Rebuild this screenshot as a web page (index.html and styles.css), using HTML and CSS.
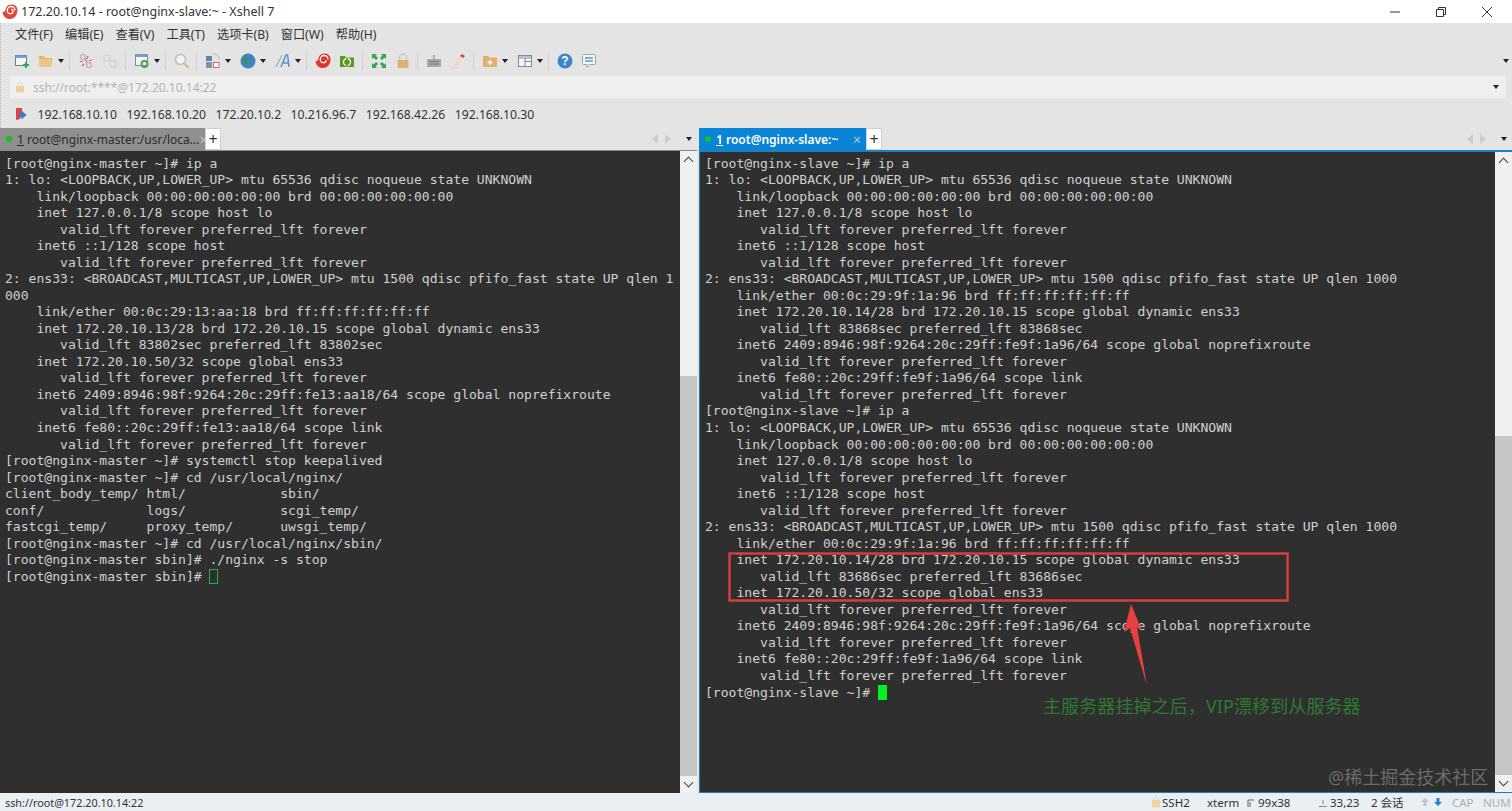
FILE: index.html
```html
<!DOCTYPE html>
<html lang="en">
<head>
    <meta charset="UTF-8">
    <title>172.20.10.14 - root@nginx-slave:~ - Xshell 7</title>
    <link rel="stylesheet" href="styles.css">
</head>
<body>

<div class="window">
    <div class="titlebar">
        <svg class="app-logo" viewBox="0 0 16 16"><path d="M15.500 6C15.500 2.500 12.500 .5 9.500 .5 5.500 .5 3.500 3.500 3.500 6 3 7.500 2 8 .5 8 1 12.500 4 15 8 15c4.500 0 7.500-4 7.500-9z" fill="#e0483c"/><path d="M13 6.500C13 4 11 2.500 9 2.500 6.800 2.500 5.300 4.500 5.300 6.400 5.300 8.200 6.800 9.700 8.500 9.700 10 9.700 11 8.500 11 7.200 11 6.100 10.100 5.300 9 5.300" fill="none" stroke="#fff" stroke-width="1.300"/></svg>
        <span class="title-text">172.20.10.14 - root@nginx-slave:~ - Xshell 7</span>
        <div class="window-btns">
            <svg viewBox="0 0 12 12"><path d="M1 6h10" stroke="#333" fill="none"/></svg>
            <svg viewBox="0 0 12 12"><path d="M1.500 3.500h7v7h-7zM3.500 3.500v-2h7v7h-2" stroke="#333" fill="none"/></svg>
            <svg viewBox="0 0 12 12"><path d="M1 1l10 10M11 1L1 11" stroke="#333" fill="none"/></svg>
        </div>
    </div>

    <div class="chrome">
        <div class="menubar">
            <span>文件(F)</span><span>编辑(E)</span><span>查看(V)</span><span>工具(T)</span><span>选项卡(B)</span><span>窗口(W)</span><span>帮助(H)</span>
        </div>

        <div class="toolbar">
            <svg class="tool" viewBox="0 0 16 16"><rect x="1.500" y="2.500" width="11" height="10" fill="#f6f6f6" stroke="#6f7f93"/><path d="M1.500 2.500h11v2.500h-11z" fill="#6fa0d8"/><path d="M12 9v6M9 12h6" stroke="#2fa84a" stroke-width="2"/></svg>
            <svg class="tool" viewBox="0 0 16 16"><path d="M1 3h5l1 2h7l-1 9H1z" fill="#e3b56f"/><path d="M1 6h14l-2 8H1z" fill="#edc587"/></svg>
            <i class="caret"></i><i class="sep"></i>
            <svg class="tool" viewBox="0 0 16 16"><circle cx="5" cy="4" r="2.500" fill="none" stroke="#bbb" stroke-width="1.500"/><circle cx="11" cy="12" r="2.500" fill="none" stroke="#bbb" stroke-width="1.500"/><path d="M2 8l3 1M7 6l2 3M10 3l-1 3M14 7l-3 1M4 13l2-2" stroke="#e0606a" stroke-width="1.300"/></svg>
            <svg class="tool" viewBox="0 0 16 16"><rect x="2" y="2" width="6" height="6" rx="2" fill="none" stroke="#d2d2d2" stroke-width="1.500"/><rect x="8" y="8" width="6" height="6" rx="2" fill="none" stroke="#d2d2d2" stroke-width="1.500"/></svg>
            <i class="sep"></i>
            <svg class="tool" viewBox="0 0 16 16"><rect x="1.500" y="1.500" width="12" height="11" fill="#f4f4f4" stroke="#7d8a99"/><path d="M1.500 1.500h12v2.500h-12z" fill="#6fa0d8"/><circle cx="10.500" cy="11" r="3" fill="none" stroke="#4ea54a" stroke-width="2"/></svg>
            <i class="caret"></i><i class="sep"></i>
            <svg class="tool" viewBox="0 0 16 16"><circle cx="6.500" cy="6.500" r="5" fill="#f4f4f4" stroke="#bdbdbd" stroke-width="1.500"/><path d="M10.500 10.500l4 4" stroke="#d9b36b" stroke-width="2"/></svg>
            <i class="sep"></i>
            <svg class="tool" viewBox="0 0 16 16"><rect x="1" y="3" width="6" height="5" fill="#5f86b5"/><rect x="1" y="9" width="6" height="6" fill="#7f93a8"/><rect x="8.500" y="9.500" width="5.500" height="5" fill="#fff" stroke="#d9606a"/><path d="M8 1h3l3 3v3" stroke="#bbb" fill="none"/></svg>
            <i class="caret"></i>
            <svg class="tool" viewBox="0 0 16 16"><circle cx="8" cy="8" r="7.500" fill="#3f86c9"/><path d="M3 5l3-2 2 2-1 3 2 2-1 3-3-3-2-2zM11 4l2 2-1 2-2-2z" fill="#3e8f5a"/></svg>
            <i class="caret"></i>
            <svg class="tool" viewBox="0 0 16 16"><path d="M1 14L7 2" stroke="#999" fill="none"/><path d="M6 14L11 2h1.500l1.500 12M8 10h5.500" stroke="#5a8fd0" stroke-width="1.500" fill="none"/></svg>
            <i class="caret"></i><i class="sep"></i>
            <svg class="tool" viewBox="0 0 16 16"><path d="M15.500 6C15.500 2.500 12.500 .5 9.500 .5 5.500 .5 3.500 3.500 3.500 6 3 7.500 2 8 .5 8 1 12.500 4 15 8 15c4.500 0 7.500-4 7.500-9z" fill="#e0352f"/><path d="M13 6.500C13 4 11 2.500 9 2.500 6.800 2.500 5.300 4.500 5.300 6.400 5.300 8.200 6.800 9.700 8.500 9.700 10 9.700 11 8.500 11 7.200" fill="none" stroke="#fff" stroke-width="1.300"/></svg>
            <svg class="tool" viewBox="0 0 16 16"><path d="M1 3h5l1 1.500h8V14H1z" fill="#5b9a1e"/><circle cx="8" cy="9" r="3.500" fill="none" stroke="#fff" stroke-width="1.300"/><path d="M8 5v8" stroke="#5b9a1e" stroke-width="1.500"/></svg>
            <i class="sep"></i>
            <svg class="tool" viewBox="0 0 16 16"><path d="M1 1h5L4.500 2.500l2.500 2.500-2 2-2.500-2.500L1 6zM15 1v5l-1.500-1.500L11 7 9 5l2.500-2.500L10 1zM1 15v-5l1.500 1.500L5 9l2 2-2.500 2.500L6 15zM15 15h-5l1.500-1.500L9 11l2-2 2.500 2.500L15 10z" fill="#35a64f"/></svg>
            <svg class="tool" viewBox="0 0 16 16"><rect x="2.500" y="7" width="11" height="8" rx="1" fill="#e1b070"/><path d="M4.500 7V4.500a3.500 3.500 0 0 1 7 0V7" fill="none" stroke="#c9c9c9" stroke-width="1.500"/></svg>
            <i class="sep"></i>
            <svg class="tool" viewBox="0 0 16 16"><rect x="1" y="6" width="14" height="8" rx="1" fill="#a9a9a9"/><path d="M8 6V2M3 8.500h10M3 11h10" stroke="#777"/></svg>
            <svg class="tool" viewBox="0 0 16 16"><path d="M4 11l6-8 3 2-6 8-3 1z" fill="#eedcc0"/><path d="M10 3l2-2 3 2-2 2z" fill="#d9484a"/><path d="M1 15h8" stroke="#e8cf9f"/></svg>
            <i class="sep"></i>
            <svg class="tool" viewBox="0 0 16 16"><path d="M1 3h5l1 1.500h8V14H1z" fill="#e1b070"/><path d="M8 7v5M5.500 9.500h5" stroke="#fff" stroke-width="1.500"/></svg>
            <i class="caret"></i>
            <svg class="tool" viewBox="0 0 16 16"><rect x="1.500" y="2.500" width="13" height="11" fill="#f6f6f6" stroke="#7f8c9c"/><path d="M1.500 3h13v2h-13zM8 5v8M8 8.500h6" stroke="#7f8c9c" fill="none"/></svg>
            <i class="caret"></i><i class="sep"></i>
            <svg class="tool" viewBox="0 0 16 16"><circle cx="8" cy="8" r="7.500" fill="#3f86c9"/><text x="8" y="12" class="help-mark">?</text></svg>
            <svg class="tool" viewBox="0 0 16 16"><path d="M2.500 1.500h11a1 1 0 0 1 1 1v8a1 1 0 0 1-1 1H8l-2 3v-3H2.500a1 1 0 0 1-1-1v-8a1 1 0 0 1 1-1z" fill="#f7f7f7" stroke="#9aa6ad"/><path d="M4 5h8M4 8h8" stroke="#5a9ad6" stroke-width="1.300"/></svg>
            <i class="caret caret-end"></i>
        </div>

        <div class="addressbar">
            <svg class="addr-lock" viewBox="0 0 10 12"><rect x="1" y="5" width="8" height="6.500" rx="1" fill="#eccf9c"/><path d="M3 5V3.500a2 2 0 0 1 4 0V5" fill="none" stroke="#d8d8d8"/></svg>
            <span class="addr-text">ssh://root:****@172.20.10.14:22</span>
            <i class="caret caret-end"></i>
        </div>

        <div class="linkbar">
            <svg class="link-icon" viewBox="0 0 12 12"><path d="M1 0h6v6l-2 2v3L1 12z" fill="#d9434a"/><path d="M7 3l4.500 4L7 11 3.500 7z" fill="#3f78c4"/></svg>
            <span>192.168.10.10</span><span>192.168.10.20</span><span>172.20.10.2</span><span>10.216.96.7</span><span>192.168.42.26</span><span>192.168.10.30</span>
        </div>
    </div>

    <div class="panes">
        <div class="pane">
            <div class="tabbar">
                <div class="tab tab-idle"><i class="dot"></i><span class="tab-label"><u>1</u> root@nginx-master:/usr/loca...</span><span class="tab-x">×</span></div>
                <div class="tab-add">+</div>
                <div class="tab-nav"><i class="nav-left"></i><i class="nav-right"></i><i class="caret"></i></div>
            </div>
            <div class="term-wrap">
<pre class="term">[root@nginx-master ~]# ip a
1: lo: &lt;LOOPBACK,UP,LOWER_UP&gt; mtu 65536 qdisc noqueue state UNKNOWN
    link/loopback 00:00:00:00:00:00 brd 00:00:00:00:00:00
    inet 127.0.0.1/8 scope host lo
       valid_lft forever preferred_lft forever
    inet6 ::1/128 scope host
       valid_lft forever preferred_lft forever
2: ens33: &lt;BROADCAST,MULTICAST,UP,LOWER_UP&gt; mtu 1500 qdisc pfifo_fast state UP qlen 1
000
    link/ether 00:0c:29:13:aa:18 brd ff:ff:ff:ff:ff:ff
    inet 172.20.10.13/28 brd 172.20.10.15 scope global dynamic ens33
       valid_lft 83802sec preferred_lft 83802sec
    inet 172.20.10.50/32 scope global ens33
       valid_lft forever preferred_lft forever
    inet6 2409:8946:98f:9264:20c:29ff:fe13:aa18/64 scope global noprefixroute
       valid_lft forever preferred_lft forever
    inet6 fe80::20c:29ff:fe13:aa18/64 scope link
       valid_lft forever preferred_lft forever
[root@nginx-master ~]# systemctl stop keepalived
[root@nginx-master ~]# cd /usr/local/nginx/
client_body_temp/ html/            sbin/
conf/             logs/            scgi_temp/
fastcgi_temp/     proxy_temp/      uwsgi_temp/
[root@nginx-master ~]# cd /usr/local/nginx/sbin/
[root@nginx-master sbin]# ./nginx -s stop
[root@nginx-master sbin]# <span class="cursor-idle"></span></pre>
                <div class="scrollbar">
                    <div class="arrow-up"></div>
                    <div class="track-top track-top-left"></div>
                    <div class="thumb"></div>
                    <div class="arrow-down"></div>
                </div>
            </div>
        </div>

        <div class="pane pane-active">
            <div class="tabbar">
                <div class="tab tab-active"><i class="dot"></i><span class="tab-label"><u>1</u> root@nginx-slave:~</span><span class="tab-x">×</span></div>
                <div class="tab-add">+</div>
                <div class="tab-nav"><i class="nav-left"></i><i class="nav-right"></i><i class="caret"></i></div>
            </div>
            <div class="term-wrap">
<pre class="term">[root@nginx-slave ~]# ip a
1: lo: &lt;LOOPBACK,UP,LOWER_UP&gt; mtu 65536 qdisc noqueue state UNKNOWN
    link/loopback 00:00:00:00:00:00 brd 00:00:00:00:00:00
    inet 127.0.0.1/8 scope host lo
       valid_lft forever preferred_lft forever
    inet6 ::1/128 scope host
       valid_lft forever preferred_lft forever
2: ens33: &lt;BROADCAST,MULTICAST,UP,LOWER_UP&gt; mtu 1500 qdisc pfifo_fast state UP qlen 1000
    link/ether 00:0c:29:9f:1a:96 brd ff:ff:ff:ff:ff:ff
    inet 172.20.10.14/28 brd 172.20.10.15 scope global dynamic ens33
       valid_lft 83868sec preferred_lft 83868sec
    inet6 2409:8946:98f:9264:20c:29ff:fe9f:1a96/64 scope global noprefixroute
       valid_lft forever preferred_lft forever
    inet6 fe80::20c:29ff:fe9f:1a96/64 scope link
       valid_lft forever preferred_lft forever
[root@nginx-slave ~]# ip a
1: lo: &lt;LOOPBACK,UP,LOWER_UP&gt; mtu 65536 qdisc noqueue state UNKNOWN
    link/loopback 00:00:00:00:00:00 brd 00:00:00:00:00:00
    inet 127.0.0.1/8 scope host lo
       valid_lft forever preferred_lft forever
    inet6 ::1/128 scope host
       valid_lft forever preferred_lft forever
2: ens33: &lt;BROADCAST,MULTICAST,UP,LOWER_UP&gt; mtu 1500 qdisc pfifo_fast state UP qlen 1000
    link/ether 00:0c:29:9f:1a:96 brd ff:ff:ff:ff:ff:ff
    inet 172.20.10.14/28 brd 172.20.10.15 scope global dynamic ens33
       valid_lft 83686sec preferred_lft 83686sec
    inet 172.20.10.50/32 scope global ens33
       valid_lft forever preferred_lft forever
    inet6 2409:8946:98f:9264:20c:29ff:fe9f:1a96/64 scope global noprefixroute
       valid_lft forever preferred_lft forever
    inet6 fe80::20c:29ff:fe9f:1a96/64 scope link
       valid_lft forever preferred_lft forever
[root@nginx-slave ~]# <span class="cursor-on"></span></pre>
                <div class="scrollbar">
                    <div class="arrow-up"></div>
                    <div class="track-top track-top-right"></div>
                    <div class="thumb"></div>
                    <div class="arrow-down"></div>
                </div>
            </div>
        </div>
    </div>

    <div class="statusbar">
        <span class="status-path">ssh://root@172.20.10.14:22</span>
        <svg class="st-lock" viewBox="0 0 10 12"><rect x="1" y="4" width="8" height="7.500" fill="#eed5a8"/><path d="M3 4V3a2 2 0 0 1 4 0v1" fill="none" stroke="#ddd"/></svg>
        <span class="st-ssh">SSH2</span>
        <span class="st-term">xterm</span>
        <span class="st-size"><svg class="st-mark" viewBox="0 0 8 8"><path d="M1 8V1h6M3 8V3" fill="none" stroke="#666"/></svg>99x38</span>
        <span class="st-pos"><svg class="st-mark" viewBox="0 0 8 8"><path d="M0 7.500h8M4 1v4" fill="none" stroke="#888"/></svg>33,23</span>
        <span class="st-sess">2 会话</span>
        <svg class="st-arrow" viewBox="0 0 10 10"><path d="M5 1l4 4H6.500v4h-3V5H1z" fill="#bcc6cc"/></svg>
        <svg class="st-arrow st-arrow-down" viewBox="0 0 10 10"><path d="M5 9l4-4H6.500V1h-3v4H1z" fill="#2f7fd0"/></svg>
        <span class="st-cap">CAP</span>
        <span class="st-num">NUM</span>
    </div>

    <!-- annotation drawn on top of the screenshot -->
    <svg class="markup" viewBox="0 0 1512 811">
        <rect x="729.500" y="553.500" width="558" height="47" fill="none" stroke="#d83c3c" stroke-width="2.500"/>
        <path d="M1131 604L1142 631 1137 627 1147 686 1130 628 1124 632z" fill="#e8403f"/>
    </svg>
    <div class="note">主服务器挂掉之后，VIP漂移到从服务器</div>
    <div class="watermark">@稀土掘金技术社区</div>
</div>

</body>
</html>
```

FILE: styles.css
```css
* {
    box-sizing: border-box;
}

html, body {
    margin: 0;
    padding: 0;
    height: 100%;
    overflow: hidden;
}

body {
    font-family: 'Noto Sans', 'Noto Sans CJK SC', sans-serif;
    font-size: 12px;
    color: #2b2b2b;
    background-color: #e4e4e4;
}

.window {
    display: flex;
    flex-direction: column;
    height: 811px;
    position: relative;
}

/* Title bar */
.titlebar {
    display: flex;
    align-items: center;
    height: 23px;
    background-color: #fff;
    padding-left: 2px;
}

.app-logo {
    width: 16px;
    height: 16px;
    margin-right: 3px;
}

.title-text {
    font-size: 12.500px;
    color: #333;
}

.window-btns {
    display: flex;
    margin-left: auto;
    margin-right: 19px;
    gap: 34px;
}

.window-btns svg {
    width: 12px;
    height: 12px;
}

/* Menus and tool rows */
.chrome {
    background-color: #e4e4e4;
    height: 105px;
    display: flex;
    flex-direction: column;
    border-left: 1px dotted #b8b8b8;
}

.menubar {
    display: flex;
    align-items: center;
    height: 22px;
    padding-left: 14px;
    gap: 12px;
    font-size: 12.200px;
    color: #333;
}

.toolbar {
    display: flex;
    align-items: center;
    height: 31px;
    padding-left: 13px;
    padding-right: 3px;
}

.tool {
    width: 16px;
    height: 16px;
    margin-right: 8px;
    flex: none;
}

.tool:has(+ .caret) {
    margin-right: 4px;
}

.tool:has(+ .sep) {
    margin-right: 6.500px;
}

.caret {
    display: block;
    width: 0;
    height: 0;
    border-left: 3.500px solid transparent;
    border-right: 3.500px solid transparent;
    border-top: 4px solid #222;
    margin-right: 9px;
    flex: none;
}

.caret:has(+ .sep) {
    margin-right: 5px;
}

.caret-end {
    margin-left: auto;
    margin-right: 0;
}

.sep {
    display: block;
    width: 1px;
    height: 18px;
    background-color: #cfcfcf;
    margin-right: 8px;
    flex: none;
}

.help-mark {
    font-family: 'Liberation Sans', sans-serif;
    font-size: 12px;
    font-weight: bold;
    fill: #fff;
    text-anchor: middle;
}

.addressbar {
    display: flex;
    align-items: center;
    height: 22px;
    margin: 0 6px 0 9px;
    padding: 0 7px 0 5px;
    background-color: #efefef;
}

.addr-lock {
    width: 10px;
    height: 12px;
    margin-right: 8px;
}

.addr-text {
    color: #b4b4b4;
    font-size: 12px;
}

.linkbar {
    display: flex;
    align-items: center;
    height: 30px;
    padding: 2px 0 0 14px;
    gap: 9.500px;
    font-size: 12.200px;
    color: #333;
}

.link-icon {
    width: 12px;
    height: 12px;
    margin-right: 1px;
}

/* Panes */
.panes {
    display: grid;
    grid-template-columns: 697px 813px;
    gap: 2px;
    flex: 1;
    min-height: 0;
}

.pane {
    display: flex;
    flex-direction: column;
    min-height: 0;
}

.tabbar {
    display: flex;
    align-items: stretch;
    height: 22px;
    flex: none;
}

.tab {
    display: flex;
    align-items: center;
    padding-left: 6px;
    font-size: 12px;
}

.tab-idle {
    width: 205px;
    background-color: #8f8f8f;
    color: #2b2b2b;
}

.tab-active {
    width: 167px;
    background-color: #0a84d6;
    color: #fff;
    font-weight: 600;
}

.dot {
    width: 6px;
    height: 6px;
    border-radius: 50%;
    background-color: #12c421;
    margin-right: 5px;
    flex: none;
}

.tab-label {
    white-space: nowrap;
}

.tab-x {
    margin-left: auto;
    margin-right: 5px;
    font-size: 14px;
    font-weight: 400;
    color: #b9c3cc;
}

.tab-add {
    display: flex;
    align-items: center;
    justify-content: center;
    width: 16px;
    background-color: #fff;
    border: 1px solid #d0d0d0;
    font-size: 16px;
    color: #333;
}

.tab-nav {
    display: flex;
    align-items: center;
    margin-left: auto;
    padding-right: 5px;
}

.tab-nav .caret {
    margin-left: 15px;
    margin-right: 0;
}

.nav-left, .nav-right {
    display: block;
    width: 0;
    height: 0;
    border-top: 5px solid transparent;
    border-bottom: 5px solid transparent;
}

.nav-left {
    border-right: 6px solid #cdcdcd;
    margin-right: 7px;
}

.nav-right {
    border-left: 6px solid #cdcdcd;
}

.term-wrap {
    display: flex;
    flex: 1;
    min-height: 0;
    border-top: 1px solid #8a8a8a;
}

.pane-active .term-wrap {
    border: 1px solid #1b7fc4;
    border-top: 2px solid #1b7fc4;
    border-right: 0;
}

.term {
    flex: 1;
    min-width: 0;
    margin: 0;
    padding: 4.500px 0 0 5px;
    overflow: hidden;
    background-color: #2f2f2f;
    color: #cfcfcf;
    font-family: 'DejaVu Sans Mono', monospace;
    font-size: 13.070px;
    line-height: 16.530px;
}

.pane-active .term {
    padding-top: 3.500px;
}

.cursor-idle, .cursor-on {
    display: inline-block;
    width: 9px;
    height: 15px;
    vertical-align: -3px;
}

.cursor-idle {
    border: 1px solid #22b040;
}

.cursor-on {
    background-color: #00f020;
}

/* Scrollbars */
.scrollbar {
    display: flex;
    flex-direction: column;
    width: 17px;
    flex: none;
    background-color: #f0f0f0;
}

.arrow-up, .arrow-down {
    height: 17px;
    flex: none;
    position: relative;
}

.arrow-up::after, .arrow-down::after {
    content: "";
    position: absolute;
    left: 5px;
    width: 6px;
    height: 6px;
    border-left: 1.500px solid #444;
    border-top: 1.500px solid #444;
    transform: rotate(45deg);
    top: 7px;
}

.arrow-down::after {
    transform: rotate(225deg);
    top: 3px;
}

.track-top {
    flex: none;
    background-color: #f0f0f0;
}

.track-top-left {
    height: 208px;
}

.track-top-right {
    height: 267px;
}

.thumb {
    flex: 1;
    background-color: #c6c6c6;
}

/* Status bar */
.statusbar {
    display: flex;
    align-items: center;
    height: 18px;
    flex: none;
    padding-left: 5px;
    background-color: #e9eff3;
    font-size: 11.500px;
    color: #333;
}

.status-path {
    margin-right: auto;
    font-size: 10.800px;
}

.st-lock {
    width: 10px;
    height: 12px;
    margin-right: 1px;
}

.st-mark {
    width: 8px;
    height: 8px;
    margin-right: 3px;
}

.st-arrow {
    width: 10px;
    height: 10px;
    margin-right: 3px;
}

.st-arrow-down {
    margin-right: 9px;
}

.st-ssh { width: 45px; }
.st-term { width: 40px; }
.st-size { width: 72px; }
.st-pos { width: 52px; }
.st-sess { width: 49px; }
.st-cap { width: 31px; color: #aab0b5; }
.st-num { width: 29px; color: #aab0b5; }

/* Annotation */
.markup {
    position: absolute;
    left: 0;
    top: 0;
    width: 1512px;
    height: 811px;
    pointer-events: none;
}

.note {
    position: absolute;
    left: 1043px;
    top: 696px;
    font-size: 18px;
    line-height: 20px;
    letter-spacing: 0.100px;
    color: #2d7a30;
    white-space: nowrap;
}

.watermark {
    position: absolute;
    left: 1328px;
    top: 764px;
    font-size: 18px;
    line-height: 26px;
    color: #6b6b6b;
    white-space: nowrap;
}
```
